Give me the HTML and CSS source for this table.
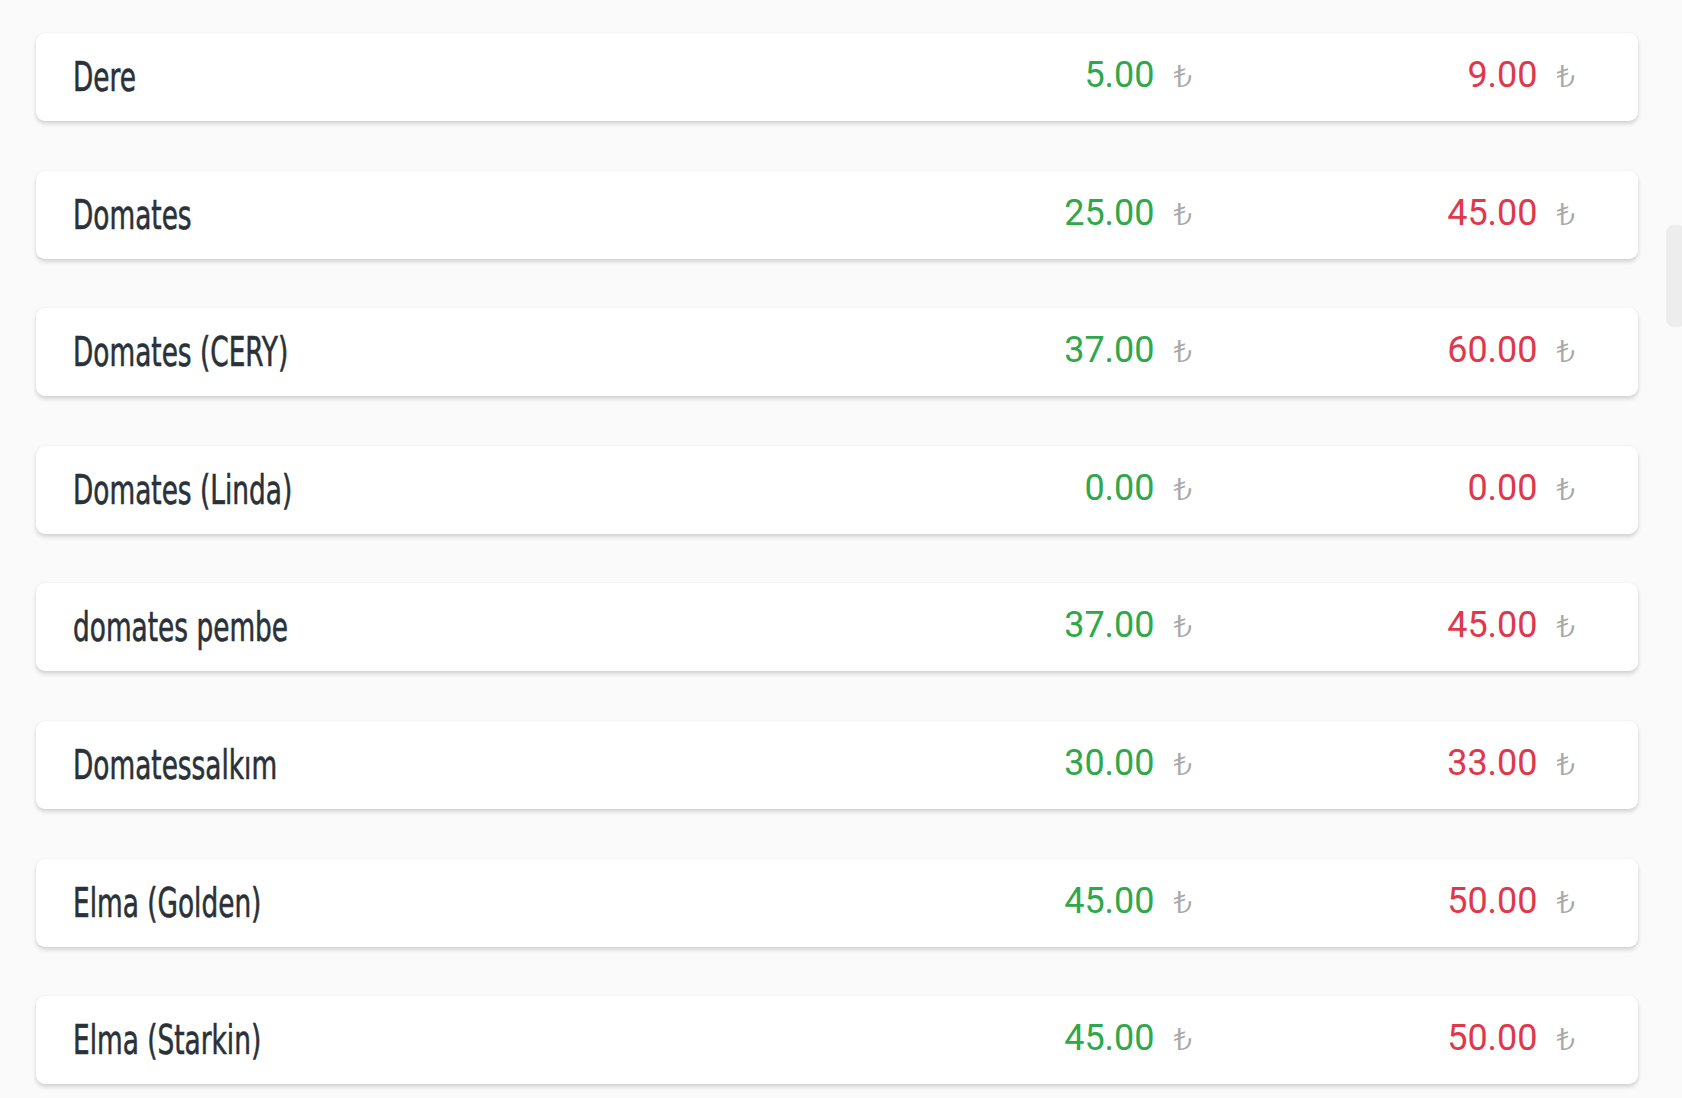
FILE: index.html
```html
<!DOCTYPE html>
<html lang="tr">
<head>
<meta charset="utf-8">
<title>Fiyatlar</title>
<link rel="stylesheet" href="styles.css">
</head>
<body>
<div class="list">
  <div class="card"><div class="name">Dere</div><div class="price buy">5.00<span class="cur">₺</span></div><div class="price sell">9.00<span class="cur">₺</span></div></div>
  <div class="card"><div class="name">Domates</div><div class="price buy">25.00<span class="cur">₺</span></div><div class="price sell">45.00<span class="cur">₺</span></div></div>
  <div class="card"><div class="name">Domates (CERY)</div><div class="price buy">37.00<span class="cur">₺</span></div><div class="price sell">60.00<span class="cur">₺</span></div></div>
  <div class="card"><div class="name">Domates (Linda)</div><div class="price buy">0.00<span class="cur">₺</span></div><div class="price sell">0.00<span class="cur">₺</span></div></div>
  <div class="card"><div class="name">domates pembe</div><div class="price buy">37.00<span class="cur">₺</span></div><div class="price sell">45.00<span class="cur">₺</span></div></div>
  <div class="card"><div class="name">Domatessalkım</div><div class="price buy">30.00<span class="cur">₺</span></div><div class="price sell">33.00<span class="cur">₺</span></div></div>
  <div class="card"><div class="name">Elma (Golden)</div><div class="price buy">45.00<span class="cur">₺</span></div><div class="price sell">50.00<span class="cur">₺</span></div></div>
  <div class="card"><div class="name">Elma (Starkin)</div><div class="price buy">45.00<span class="cur">₺</span></div><div class="price sell">50.00<span class="cur">₺</span></div></div>
</div>
<div class="scroll-thumb"></div>
</body>
</html>
```

FILE: styles.css
```css
html, body {
  margin: 0;
  padding: 0;
  background: #fafafa;
  height: 100%;
  overflow: hidden;
}
body {
  font-family: Roboto, "Liberation Sans", sans-serif;
}
.list {
  display: flex;
  flex-direction: column;
  gap: 49.6px;
  padding: 33px 44px 0 36px;
}
.card {
  display: flex;
  align-items: center;
  height: 88px;
  background: #ffffff;
  border-radius: 9px;
  box-shadow: 0 3px 4px rgba(0, 0, 0, 0.15), 0 0 3px rgba(0, 0, 0, 0.05);
  padding: 0 64px 0 37px;
  box-sizing: border-box;
}
.name {
  flex: 1;
  font-family: "DejaVu Sans Condensed", "Liberation Sans", sans-serif;
  font-size: 41px;
  color: #2a3138;
  -webkit-text-stroke: 0.6px #2a3138;
  transform: scaleX(0.715);
  transform-origin: left center;
  white-space: nowrap;
}
.price {
  text-align: right;
  font-size: 36px;
  font-family: Roboto, sans-serif;
  white-space: nowrap;
  padding-bottom: 4px;
}
.buy {
  color: #2ea84a;
  width: 300px;
}
.sell {
  color: #e0384b;
  width: 383px;
}
.cur {
  display: inline-block;
  color: #a8a8a8;
  font-size: 32px;
  font-weight: 300;
  margin-left: 20px;
  transform: scaleX(1.2);
}
.scroll-thumb {
  position: absolute;
  left: 1666px;
  top: 225px;
  width: 20px;
  height: 102px;
  border-radius: 8px;
  background: #ededed;
}
```
